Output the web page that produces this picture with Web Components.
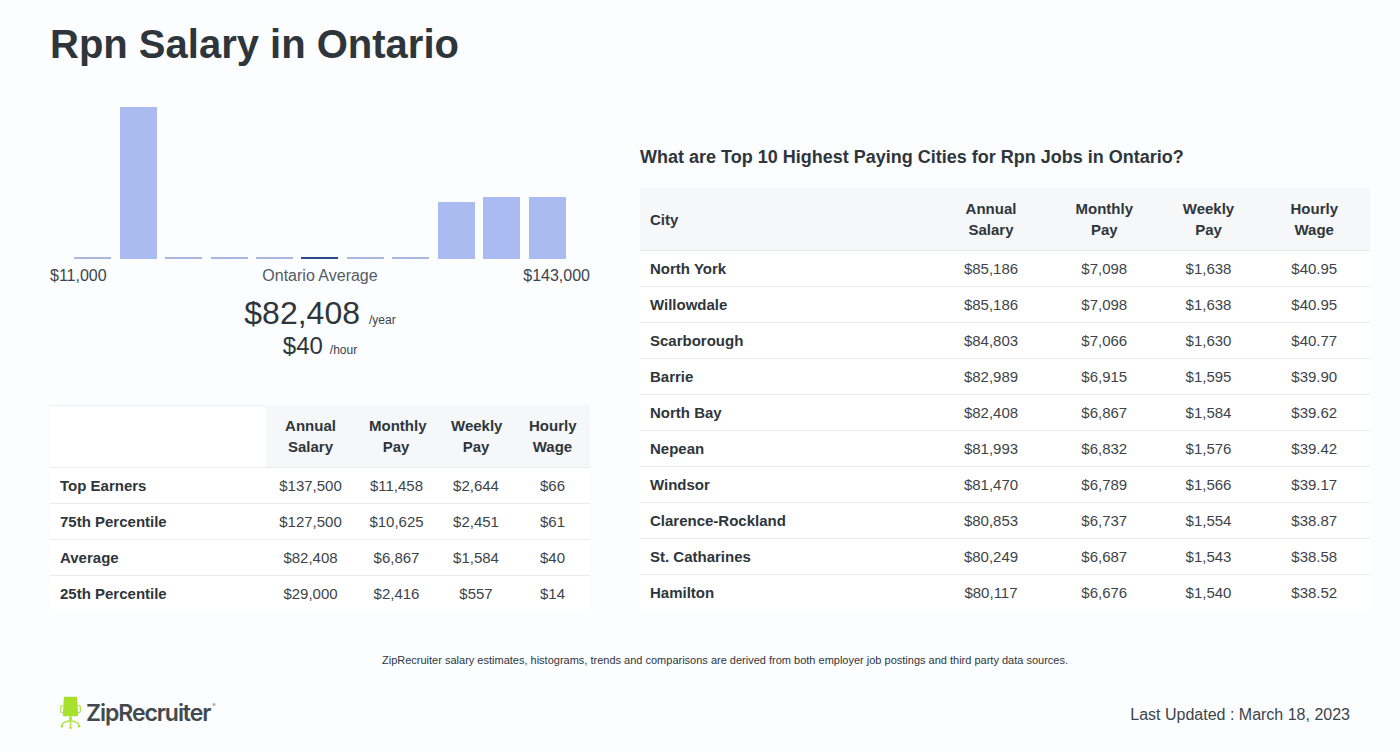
<!DOCTYPE html>
<html lang="en">
<head>
<meta charset="utf-8">
<title>Rpn Salary in Ontario</title>
<style>
html,body{margin:0;padding:0;background:#fbfdff;}
body{font-family:"Liberation Sans",Arial,sans-serif;color:#2f363b;}
</style>
</head>
<body>
<salary-page>
  <span slot="title">Rpn Salary in Ontario</span>
  <salary-histogram slot="left" bars="2,152,2,2,2,2,2,2,57,62,62" active="5"></salary-histogram>
  <salary-summary slot="left" min="$11,000" max="$143,000" label="Ontario Average" year="$82,408" hour="$40"></salary-summary>
  <salary-table slot="left" class="l" widths="216,89,82,78,75" blank
    head="|Annual Salary|Monthly Pay|Weekly Pay|Hourly Wage"
    rows="Top Earners|$137,500|$11,458|$2,644|$66;75th Percentile|$127,500|$10,625|$2,451|$61;Average|$82,408|$6,867|$1,584|$40;25th Percentile|$29,000|$2,416|$557|$14"></salary-table>
  <span slot="heading">What are Top 10 Highest Paying Cities for Rpn Jobs in Ontario?</span>
  <salary-table slot="right" widths="292,118,108.5,100,111.5"
    head="City|Annual Salary|Monthly Pay|Weekly Pay|Hourly Wage"
    rows="North York|$85,186|$7,098|$1,638|$40.95;Willowdale|$85,186|$7,098|$1,638|$40.95;Scarborough|$84,803|$7,066|$1,630|$40.77;Barrie|$82,989|$6,915|$1,595|$39.90;North Bay|$82,408|$6,867|$1,584|$39.62;Nepean|$81,993|$6,832|$1,576|$39.42;Windsor|$81,470|$6,789|$1,566|$39.17;Clarence-Rockland|$80,853|$6,737|$1,554|$38.87;St. Catharines|$80,249|$6,687|$1,543|$38.58;Hamilton|$80,117|$6,676|$1,540|$38.52"></salary-table>
  <span slot="note">ZipRecruiter salary estimates, histograms, trends and comparisons are derived from both employer job postings and third party data sources.</span>
  <zr-logo slot="logo"></zr-logo>
  <span slot="updated">Last Updated : March 18, 2023</span>
</salary-page>
<script>
function shadow(el,html){el.attachShadow({mode:'open'}).innerHTML=html;}

customElements.define('salary-page',class extends HTMLElement{
  constructor(){super();shadow(this,`<style>
    :host{display:block;width:1400px;height:752px;box-sizing:border-box;padding-left:50px;overflow:hidden;}
    h1{margin:0;padding-top:20px;height:87px;box-sizing:border-box;font-size:40px;line-height:48px;font-weight:700;color:#2f363b;}
    .cols{display:grid;grid-template-columns:540px 730px;column-gap:50px;align-items:end;height:524px;}
    .left{display:flex;flex-direction:column;}
    .right{padding-bottom:1px;}
    h2{margin:0 0 20px;font-size:18px;line-height:22px;font-weight:700;color:#2f363b;}
    .note{font-size:11px;line-height:14px;text-align:center;margin-top:42px;color:#2f363b;}
    .foot{display:flex;justify-content:space-between;align-items:center;padding:0 50px 0 9px;margin-top:29px;font-size:16px;color:#3d4449;}
    .foot ::slotted([slot=updated]){position:relative;top:2px;}
  </style>
  <h1><slot name="title"></slot></h1>
  <div class="cols">
    <div class="left"><slot name="left"></slot></div>
    <div class="right"><h2><slot name="heading"></slot></h2><slot name="right"></slot></div>
  </div>
  <div class="note"><slot name="note"></slot></div>
  <div class="foot"><slot name="logo"></slot><slot name="updated"></slot></div>`);}
});

customElements.define('salary-histogram',class extends HTMLElement{
  connectedCallback(){
    const active=+this.getAttribute('active');
    const bars=this.getAttribute('bars').split(',').map((h,i)=>
      `<div class="cell"><div class="bar${h<3?' thin':''}${i===active?' on':''}" style="height:${h}px"></div></div>`).join('');
    shadow(this,`<style>
      :host{display:block;}
      .chart{display:flex;align-items:flex-end;height:152px;padding:0 20px;}
      .cell{flex:1 1 0;display:flex;justify-content:center;align-items:flex-end;}
      .bar{width:37px;background:#a9bbf0;}
      .thin{background:#a9b8de;}
      .on{background:#2b4a85;}
    </style><div class="chart">${bars}</div>`);
  }
});

customElements.define('salary-summary',class extends HTMLElement{
  connectedCallback(){
    const a=n=>this.getAttribute(n);
    shadow(this,`<style>
      :host{display:block;height:146px;color:#2f363b;}
      .scale{display:grid;grid-template-columns:1fr auto 1fr;font-size:16px;line-height:18px;margin-top:8px;color:#3d4449;}
      .scale span:last-child{text-align:right;}
      .lbl{color:#555c63;}
      .big{text-align:center;font-size:32px;line-height:37px;margin-top:10px;white-space:nowrap;}
      .mid{text-align:center;font-size:24px;line-height:28px;margin-top:-7px;white-space:nowrap;}
      small{font-size:12px;margin-left:9px;color:#3d4449;}
      .mid small{margin-left:7px;}
    </style>
    <div class="scale"><span>${a('min')}</span><span class="lbl">${a('label')}</span><span>${a('max')}</span></div>
    <div class="big">${a('year')}<small>/year</small></div>
    <div class="mid">${a('hour')}<small>/hour</small></div>`);
  }
});

customElements.define('salary-table',class extends HTMLElement{
  connectedCallback(){
    const w=this.getAttribute('widths').split(',');
    const head=this.getAttribute('head').split('|');
    const rows=this.getAttribute('rows').split(';').map(r=>r.split('|'));
    const blank=this.hasAttribute('blank');
    shadow(this,`<style>
      :host{display:block;}
      table{border-collapse:separate;border-spacing:0;table-layout:fixed;width:100%;font-size:15px;color:#2f363b;background:#fff;}
      th,td{padding:0;text-align:center;font-weight:400;}
      thead th{height:62px;line-height:21px;font-weight:700;background:#f5f7f8;border-bottom:1px solid #e9ebee;padding:0 14px;}
      thead.top th{height:59px;padding-bottom:2px;border-top:1px solid #f5f7f8;}
      thead th.blank{background:#fff;border-top:1px solid #eef0f2;}
      .lt tbody td:nth-child(3){padding-left:1px;}
      th.first,td.first{text-align:left;padding-left:10px;font-weight:700;}
      tbody td{height:35px;line-height:18px;border-bottom:1px solid #e9ebee;color:#3d4449;}
      tbody td.first{color:#2f363b;}
      tbody tr:last-child td{border-bottom:0;}
    </style>
    <table class="${blank?'lt':''}"><colgroup>${w.map(x=>`<col style="width:${x}px">`).join('')}</colgroup>
    <thead class="${blank?'top':'std'}"><tr>${head.map((h,i)=>`<th class="${i===0?'first ':''}${i===0&&blank?'blank':''}">${h.replace(' ','<br>')}</th>`).join('')}</tr></thead>
    <tbody>${rows.map(r=>`<tr>${r.map((c,i)=>`<td class="${i===0?'first':''}">${c}</td>`).join('')}</tr>`).join('')}</tbody></table>`);
  }
});

customElements.define('zr-logo',class extends HTMLElement{
  constructor(){super();shadow(this,`<style>
    :host{display:inline-flex;align-items:center;gap:5px;height:34px;margin-left:1px;}
    svg{display:block;width:21px;height:34px;}
    span{font:600 23px/1 Inter,"Open Sans",sans-serif;letter-spacing:-1.05px;color:#43494d;white-space:nowrap;}
    sup{font-size:5px;line-height:1;vertical-align:top;position:relative;top:1px;color:#777c80;letter-spacing:0;margin-left:2px;}
  </style>
  <svg viewBox="0 0 22 34" aria-hidden="true">
    <path d="M4 1.200C4 .5 4.500 0 5.200 0h11.600c.7 0 1.200.5 1.200 1.200L19 19c0 .9-.6 1.500-1.500 1.500h-13C3.600 20.500 3 19.900 3 19z" fill="#a8e02e"/>
    <path d="M3.200 9.500H1.800c-.7 0-1.100.4-1.100 1V15c0 1 .7 1.700 1.700 1.700h.8M18.800 9.500h1.400c.7 0 1.100.4 1.100 1V15c0 1-.7 1.700-1.700 1.700h-.8" fill="none" stroke="#a8e02e" stroke-width="1.100"/>
    <path d="M9.700 20.500h2.600V25H9.700z" fill="#a8e02e"/>
    <path d="M2 30.200c0-2 3.500-4.200 9-5 5.500.8 9 3 9 5M11 25v6.500" fill="none" stroke="#b4e34e" stroke-width="1.500"/>
    <circle cx="2" cy="31" r="1.300" fill="#a8e02e"/><circle cx="20" cy="31" r="1.300" fill="#a8e02e"/><circle cx="11" cy="32.500" r="1.300" fill="#a8e02e"/>
  </svg><span>ZipRecruiter<sup>®</sup></span>`);}
});
</script>
</body>
</html>
